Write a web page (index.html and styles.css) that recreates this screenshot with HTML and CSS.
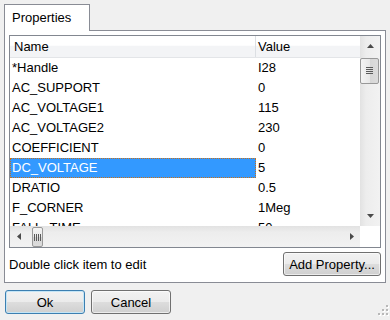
FILE: index.html
```html
<!DOCTYPE html>
<html lang="en">

<head>
    <meta charset="UTF-8">
    <meta name="viewport" content="width=device-width, initial-scale=1.0">
    <title>Properties</title>
    <link rel="stylesheet" href="styles.css">
</head>

<body>
    <div class="tab_strip">
        <div class="tab">Properties</div>
    </div>
    <div class="panel">
        <div class="list_view">
            <div class="list_body">
                <div class="list_cols">
                    <div class="header">
                        <div class="col_name">Name</div>
                        <div class="col_value">Value</div>
                    </div>
                    <div class="row"><div class="col_name">*Handle</div><div class="col_value">I28</div></div>
                    <div class="row"><div class="col_name">AC_SUPPORT</div><div class="col_value">0</div></div>
                    <div class="row"><div class="col_name">AC_VOLTAGE1</div><div class="col_value">115</div></div>
                    <div class="row"><div class="col_name">AC_VOLTAGE2</div><div class="col_value">230</div></div>
                    <div class="row"><div class="col_name">COEFFICIENT</div><div class="col_value">0</div></div>
                    <div class="row selected"><div class="col_name">DC_VOLTAGE</div><div class="col_value">5</div></div>
                    <div class="row"><div class="col_name">DRATIO</div><div class="col_value">0.5</div></div>
                    <div class="row"><div class="col_name">F_CORNER</div><div class="col_value">1Meg</div></div>
                    <div class="row"><div class="col_name">FALL_TIME</div><div class="col_value">50</div></div>
                </div>
                <div class="vscroll">
                    <div class="sb_btn">
                        <svg width="7" height="4" viewBox="0 0 7 4"><polygon points="0,4 3.5,0 7,4" fill="#4a4a4a"/></svg>
                    </div>
                    <div class="vthumb">
                        <svg width="7" height="8" viewBox="0 0 7 8">
                            <rect x="0" y="0" width="7" height="1" fill="#5a5a5a"/>
                            <rect x="0" y="2" width="7" height="1" fill="#5a5a5a"/>
                            <rect x="0" y="4" width="7" height="1" fill="#5a5a5a"/>
                            <rect x="0" y="6" width="7" height="1" fill="#5a5a5a"/>
                        </svg>
                    </div>
                    <div class="sb_fill"></div>
                    <div class="sb_btn">
                        <svg width="7" height="4" viewBox="0 0 7 4"><polygon points="0,0 7,0 3.5,4" fill="#4a4a4a"/></svg>
                    </div>
                </div>
            </div>
            <div class="hscroll_row">
                <div class="hscroll">
                    <div class="sb_btn_h">
                        <svg width="4" height="7" viewBox="0 0 4 7"><polygon points="4,0 4,7 0,3.5" fill="#4a4a4a"/></svg>
                    </div>
                    <div class="hthumb">
                        <svg width="7" height="7" viewBox="0 0 7 7">
                            <rect x="0" y="0" width="1" height="7" fill="#5a5a5a"/>
                            <rect x="2" y="0" width="1" height="7" fill="#5a5a5a"/>
                            <rect x="4" y="0" width="1" height="7" fill="#5a5a5a"/>
                            <rect x="6" y="0" width="1" height="7" fill="#5a5a5a"/>
                        </svg>
                    </div>
                    <div class="sb_fill"></div>
                    <div class="sb_btn_h">
                        <svg width="4" height="7" viewBox="0 0 4 7"><polygon points="0,0 4,3.5 0,7" fill="#4a4a4a"/></svg>
                    </div>
                </div>
                <div class="corner"></div>
            </div>
        </div>
        <div class="panel_footer">
            <span>Double click item to edit</span>
            <button class="btn add_btn">Add Property...</button>
        </div>
    </div>
    <div class="dialog_buttons">
        <button class="btn ok_btn">Ok</button>
        <button class="btn">Cancel</button>
        <svg class="grip" width="12" height="12" viewBox="0 0 12 12">
            <rect x="10" y="2" width="2" height="2" fill="#fff"/>
            <rect x="6" y="6" width="2" height="2" fill="#fff"/>
            <rect x="10" y="6" width="2" height="2" fill="#fff"/>
            <rect x="2" y="10" width="2" height="2" fill="#fff"/>
            <rect x="6" y="10" width="2" height="2" fill="#fff"/>
            <rect x="10" y="10" width="2" height="2" fill="#fff"/>
            <rect x="9" y="1" width="2" height="2" fill="#b8b8b8"/>
            <rect x="5" y="5" width="2" height="2" fill="#b8b8b8"/>
            <rect x="9" y="5" width="2" height="2" fill="#b8b8b8"/>
            <rect x="1" y="9" width="2" height="2" fill="#b8b8b8"/>
            <rect x="5" y="9" width="2" height="2" fill="#b8b8b8"/>
            <rect x="9" y="9" width="2" height="2" fill="#b8b8b8"/>
        </svg>
    </div>
</body>
</html>
```

FILE: styles.css
```css
* {
    box-sizing: border-box;
}

body {
    margin: 0;
    background-color: #f0f0f0;
    font-family: "Liberation Sans", Arial, sans-serif;
    font-size: 13px;
    color: #000;
    height: 320px;
    overflow: hidden;
}

.tab_strip {
    padding: 4px 0 0 4px;
    display: flex;
}

.tab {
    position: relative;
    z-index: 1;
    width: 86px;
    height: 27px;
    margin-bottom: -1px;
    padding: 3px 0 0 7px;
    line-height: 20px;
    background-color: #fff;
    border: 1px solid #898c95;
    border-bottom: none;
}

.panel {
    margin: 0 4px;
    background-color: #fff;
    border: 1px solid #898c95;
    padding: 4px 4px 0 4px;
}

.list_view {
    border: 1px solid #828790;
    display: flex;
    flex-direction: column;
}

.list_body {
    display: flex;
    height: 190px;
}

.list_cols {
    width: 350px;
    overflow: hidden;
}

.header {
    display: flex;
    height: 22px;
    line-height: 21px;
    background: linear-gradient(#ffffff 0%, #ffffff 45%, #f3f4f6 46%, #f3f4f6 100%);
    border-bottom: 1px solid #e3e5e8;
}

.header .col_name {
    width: 246px;
    padding-left: 4px;
    border-right: 1px solid #dcdfe3;
}

.header .col_value {
    padding-left: 2px;
}

.row {
    display: flex;
    height: 20px;
    line-height: 20px;
    flex-shrink: 0;
}

.row .col_name {
    width: 246px;
    padding-left: 2px;
}

.row .col_value {
    padding-left: 2px;
}

.row.selected .col_name {
    background-color: #3399ff;
    color: #fff;
    outline: 1px dotted #c8701a;
    outline-offset: -1px;
}

.vscroll {
    width: 20px;
    display: flex;
    flex-direction: column;
    background: linear-gradient(to right, #e2e2e2, #ededed 30%, #f2f2f2);
}

.sb_btn {
    height: 20px;
    display: flex;
    align-items: center;
    justify-content: center;
    flex-shrink: 0;
}

.sb_fill {
    flex: 1;
}

.vthumb {
    margin: 2px 1px 0 0;
    height: 26px;
    border: 1px solid #999;
    border-radius: 2px;
    background: linear-gradient(to right, #f4f4f4, #e8e8e8 50%, #d6d6d6 51%, #dcdcdc);
    display: flex;
    align-items: center;
    justify-content: center;
}

.hscroll_row {
    display: flex;
    height: 21px;
}

.hscroll {
    width: 350px;
    display: flex;
    background: linear-gradient(#e2e2e2, #ededed 30%, #f2f2f2);
}

.sb_btn_h {
    width: 17px;
    display: flex;
    align-items: center;
    justify-content: center;
    flex-shrink: 0;
}

.hthumb {
    margin: 1px 0 0 5px;
    width: 11px;
    border: 1px solid #999;
    border-radius: 2px;
    background: linear-gradient(#f4f4f4, #e8e8e8 50%, #d6d6d6 51%, #dcdcdc);
    display: flex;
    align-items: center;
    justify-content: center;
    overflow: hidden;
}

.corner {
    width: 20px;
    background-color: #fff;
}

.panel_footer {
    display: flex;
    align-items: center;
    justify-content: space-between;
    padding: 4px 0 6px 0;
}

.btn {
    font-family: "Liberation Sans", Arial, sans-serif;
    font-size: 13px;
    color: #000;
    height: 24px;
    padding: 0;
    border: 1px solid #707070;
    border-radius: 3px;
    background: linear-gradient(#f2f2f2 0%, #ebebeb 50%, #dddddd 51%, #cfcfcf 100%);
    box-shadow: inset 0 0 0 1px rgba(255, 255, 255, 0.6);
}

.add_btn {
    width: 98px;
}

.dialog_buttons {
    display: flex;
    gap: 6px;
    padding: 7px 1px 0 5px;
}

.dialog_buttons .btn {
    width: 80px;
}

.ok_btn {
    border-color: #3c7fb1;
    box-shadow: inset 0 0 0 1px #c4e5f6;
}

.grip {
    margin-left: auto;
    align-self: flex-end;
    margin-bottom: -2px;
}
```
